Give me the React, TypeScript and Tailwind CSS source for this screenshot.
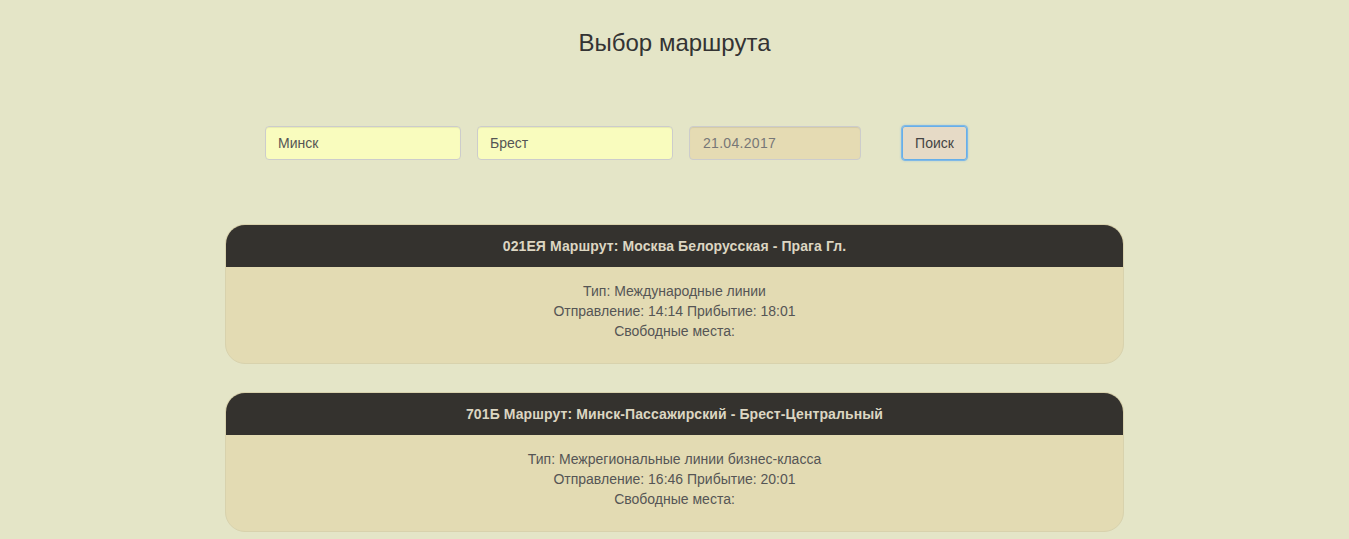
import React from 'react';

type Route = {
  title: string;
  type: string;
  depart: string;
  arrive: string;
};

const routes: Route[] = [
  {
    title: '021ЕЯ Маршрут: Москва Белорусская - Прага Гл.',
    type: 'Международные линии',
    depart: '14:14',
    arrive: '18:01',
  },
  {
    title: '701Б Маршрут: Минск-Пассажирский - Брест-Центральный',
    type: 'Межрегиональные линии бизнес-класса',
    depart: '16:46',
    arrive: '20:01',
  },
];

function RouteCard({ route }: { route: Route }) {
  return (
    <div className="w-[899px] rounded-[20px] border border-[#d8d2ad] bg-[#e3dbb3] overflow-hidden">
      <div className="h-[42px] bg-[#34322e] flex items-center justify-center text-[14px] tracking-[0.1px] font-bold text-[#dcd6c2]">
        {route.title}
      </div>
      <div className="pt-[14px] pb-[22px] text-center text-[14px] leading-[20px] text-[#555]">
        <div>Тип: {route.type}</div>
        <div>
          Отправление: {route.depart} Прибытие: {route.arrive}
        </div>
        <div>Свободные места:</div>
      </div>
    </div>
  );
}

export default function App() {
  return (
    <div
      className="min-h-[539px] bg-[#e4e5c7] text-[#333]"
      style={{ fontFamily: '"Liberation Sans", Arial, sans-serif' }}
    >
      <h1 className="pt-[30px] text-center text-[24px] leading-[26px] font-normal text-[#333]">
        Выбор маршрута
      </h1>

      <div className="mt-[70px] ml-[265px] flex items-center">
        <input
          defaultValue="Минск"
          className="w-[196px] h-[34px] rounded-[4px] border border-[#ccc] bg-[#f9fcbe] px-[12px] text-[14px] text-[#555] shadow-[inset_0_1px_1px_rgba(0,0,0,0.075)] outline-none"
        />
        <input
          defaultValue="Брест"
          className="ml-[16px] w-[196px] h-[34px] rounded-[4px] border border-[#ccc] bg-[#f9fcbe] px-[12px] text-[14px] text-[#555] shadow-[inset_0_1px_1px_rgba(0,0,0,0.075)] outline-none"
        />
        <input
          defaultValue="21.04.2017"
          readOnly
          className="ml-[16px] w-[172px] h-[34px] rounded-[4px] border border-[#ccc] bg-[#e5dbb3] px-[13px] text-[14px] tracking-[0.3px] text-[#777] shadow-[inset_0_1px_1px_rgba(0,0,0,0.075)] outline-none"
        />
        <button className="ml-[41px] h-[34px] w-[65px] rounded-[3px] border border-[#66afe9] bg-[#e6dac6] text-[14px] text-[#444] shadow-[0_0_3px_rgba(102,175,233,0.9)] outline outline-1 outline-[#7fb8e6]">
          Поиск
        </button>
      </div>

      <div className="mt-[64px] flex flex-col items-center gap-[28px] pb-[10px]">
        {routes.map((r) => (
          <RouteCard key={r.title} route={r} />
        ))}
      </div>
    </div>
  );
}
